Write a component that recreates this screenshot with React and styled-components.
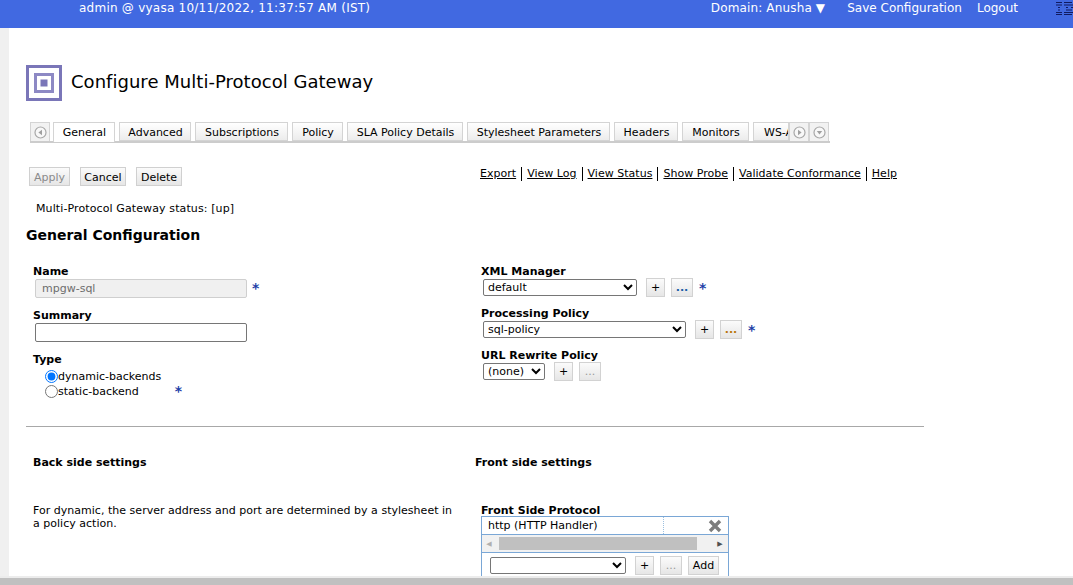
import styled, { createGlobalStyle } from 'styled-components';

const tabs = [
	{ label: 'General', width: 62, active: true },
	{ label: 'Advanced', width: 72 },
	{ label: 'Subscriptions', width: 93 },
	{ label: 'Policy', width: 51 },
	{ label: 'SLA Policy Details', width: 116 },
	{ label: 'Stylesheet Parameters', width: 143 },
	{ label: 'Headers', width: 64 },
	{ label: 'Monitors', width: 67 },
];

const links = ['Export', 'View Log', 'View Status', 'Show Probe', 'Validate Conformance', 'Help'];

const GlobalStyle = createGlobalStyle`
	html, body {
		margin: 0;
		height: 585px;
		overflow: hidden;
		background: #ffffff;
	}
	body {
		font-family: "DejaVu Sans", Verdana, sans-serif;
		font-size: 11px;
		color: #000000;
	}
`;

const Page = styled.div`
	position: relative;
	width: 1073px;
	height: 585px;
	overflow: hidden;
`;

const TopBar = styled.header`
	box-sizing: border-box;
	display: flex;
	justify-content: space-between;
	height: 28px;
	padding: 0 0 0 79px;
	background: #4169e1;
	color: #ffffff;
	font-size: 12px;
	line-height: 15px;
`;

const TopLeft = styled.span`
	margin-top: 1px;
	letter-spacing: 0.24px;
`;

const TopRight = styled.nav`
	display: flex;
	align-items: flex-start;
	margin-top: 1px;
`;

const TopItem = styled.span`
	margin-left: ${props => props.$gap || 0}px;
	letter-spacing: ${props => props.$spacing || 0}px;
`;

const IbmLogo = styled.svg`
	margin: 0 0 0 ${props => props.$gap}px;
	width: 17px;
	height: 14px;
`;

const Body = styled.div`
	display: flex;
`;

const Gutter = styled.div`
	flex: 0 0 9px;
	height: 549px;
	background: #f0f0f0;
`;

const Main = styled.main`
	flex: 1;
	padding: 37px 0 0 17px;
`;

const TitleRow = styled.div`
	display: flex;
	align-items: center;
	gap: 9px;
	height: 36px;
`;

const Title = styled.h1`
	margin: -4px 0 0;
	font-size: 18px;
	font-weight: normal;
	letter-spacing: 0.03px;
`;

const TabBar = styled.div`
	display: flex;
	box-sizing: border-box;
	width: 800px;
	height: 21px;
	margin: 21px 0 0 4px;
	border-bottom: 2px solid #cccccc;
`;

const ArrowBox = styled.div`
	box-sizing: border-box;
	flex: 0 0 20px;
	height: 19px;
	display: flex;
	align-items: center;
	justify-content: center;
	border: 1px solid #d4d4d4;
	border-bottom: 0;
	background: #f2f2f2;
`;

const Tab = styled.div`
	box-sizing: border-box;
	flex: 0 0 ${props => props.$width}px;
	height: ${props => (props.$active ? 20 : 19)}px;
	margin-left: ${props => props.$left}px;
	padding-left: 1px;
	border: 1px solid #d4d4d4;
	border-bottom: ${props => (props.$active ? '0' : '1px solid #d4d4d4')};
	background: ${props => (props.$active ? '#ffffff' : 'linear-gradient(#ffffff, #ececec)')};
	text-align: center;
	line-height: 19px;
	white-space: nowrap;
	overflow: hidden;
`;

const ClippedTab = styled(Tab)`
	text-align: left;
	padding-left: 10px;
`;

const ActionRow = styled.div`
	display: flex;
	height: 32px;
	margin: 24px 0 0 3px;
`;

const ActionButtons = styled.div`
	display: flex;
	gap: 10px;
	width: 451px;
`;

const ActionButton = styled.div`
	box-sizing: border-box;
	width: ${props => props.$width}px;
	height: 19px;
	border: 1px solid #d0d0d0;
	background: linear-gradient(#fbfbfb, #e6e6e6);
	text-align: center;
	line-height: 19px;
	color: ${props => (props.$disabled ? '#8a8a8a' : '#000000')};
`;

const LinkRow = styled.div`
	display: flex;
	align-items: flex-start;
	height: 15px;
	letter-spacing: 0.02px;
`;

const LinkItem = styled.a`
	padding: 0 5px;
	border-left: ${props => (props.$first ? '0' : '1px solid #000000')};
	padding-left: ${props => (props.$first ? 0 : 5)}px;
	line-height: 14px;
	color: #000000;
	text-decoration: underline;
`;

const Status = styled.div`
	margin: 2px 0 0 10px;
	line-height: 15px;
	letter-spacing: 0.11px;
`;

const SectionTitle = styled.h2`
	margin: 10px 0 0;
	font-size: 14px;
	line-height: 18px;
	font-weight: bold;
`;

const Columns = styled.div`
	display: grid;
	grid-template-columns: 448px 1fr;
	margin: 21px 0 0 7px;
	width: 700px;
	height: 161px;
`;

const Label = styled.label`
	display: block;
	font-weight: bold;
	line-height: 14px;
	margin-top: ${props => props.$top || 0}px;
`;

const Field = styled.div`
	display: flex;
	align-items: flex-start;
	padding-left: 2px;
`;

const TextInput = styled.input`
	box-sizing: border-box;
	width: 212px;
	height: 19px;
	margin: 0;
	padding: 0 6px;
	border: 1px solid ${props => (props.disabled ? '#cfcfcf' : '#767676')};
	border-radius: 2px;
	background: ${props => (props.disabled ? '#f0f0f0' : '#ffffff')};
	color: #6d6d6d;
	font: 11px "DejaVu Sans", sans-serif;
`;

const Required = styled.span`
	margin-left: ${props => props.$left}px;
	color: #1d3fa8;
	font-size: 14px;
	font-weight: bold;
	line-height: 19px;
`;

const RadioList = styled.div`
	padding: 2px 0 0 12px;
`;

const RadioRow = styled.div`
	display: flex;
	align-items: center;
	height: 15px;
`;

const Radio = styled.input`
	width: 13px;
	height: 13px;
	margin: 0;
`;

const SelectBox = styled.select`
	box-sizing: border-box;
	width: ${props => props.$width}px;
	height: 17px;
	margin: 0;
	padding: 0;
	border-radius: 2px;
	background: #ffffff;
	font: 11px "DejaVu Sans", sans-serif;
`;

const SmallButton = styled.div`
	box-sizing: border-box;
	width: ${props => props.$width}px;
	height: 19px;
	margin: -1px 0 0 ${props => props.$left}px;
	border: 1px solid #d2d2d2;
	background: linear-gradient(#fbfbfb, #e6e6e6);
	text-align: center;
	line-height: 18px;
	font-weight: ${props => (props.$bold ? 'bold' : 'normal')};
	color: ${props => props.$color || '#000000'};
`;

const Rule = styled.hr`
	width: 898px;
	margin: 0;
	border: 0;
	border-top: 1px solid #a8a8a8;
`;

const SideHeads = styled.div`
	display: grid;
	grid-template-columns: 442px 1fr;
	margin: 29px 0 0 7px;
	font-weight: bold;
	line-height: 14px;
`;

const LowerColumns = styled.div`
	display: grid;
	grid-template-columns: 448px 1fr;
	margin: 34px 0 0 7px;
`;

const HelpText = styled.p`
	margin: 0;
	width: 424px;
	line-height: 13px;
	letter-spacing: 0.02px;
`;

const ProtocolTable = styled.div`
	box-sizing: border-box;
	width: 248px;
	border: 1px solid #7aa7d6;
	border-bottom: 0;
	margin-top: -2px;
`;

const ProtocolRow = styled.div`
	display: flex;
	justify-content: space-between;
	height: 17px;
	border-bottom: 1px solid #7aa7d6;
	line-height: 17px;
`;

const ProtocolName = styled.span`
	box-sizing: border-box;
	width: 182px;
	padding-left: 6px;
	border-right: 1px dotted #9cc0e0;
`;

const RemoveIcon = styled.svg`
	width: 14px;
	height: 14px;
	margin: 2px 6px 0 0;
`;

const TableScroll = styled.div`
	display: flex;
	align-items: center;
	height: 17px;
	border-bottom: 1px solid #7aa7d6;
	background: #f1f1f1;
`;

const ScrollThumb = styled.div`
	width: 198px;
	height: 13px;
	margin: 0 16px 0 3px;
	background: #c0c0c0;
`;

const ScrollArrow = styled.span`
	flex: 0 0 14px;
	text-align: center;
	font-size: 7px;
	color: ${props => props.$color};
`;

const AddRow = styled.div`
	display: flex;
	align-items: flex-start;
	padding: 4px 0 0 8px;
	height: 20px;
`;

const BottomScrollbar = styled.div`
	position: absolute;
	left: 0;
	right: 0;
	bottom: 0;
	height: 7px;
	background: #c0c0c0;
	border-top: 2px solid #ececec;
`;

const App = () => (
	<Page>
		<GlobalStyle />
		<TopBar>
			<TopLeft>admin @ vyasa 10/11/2022, 11:37:57 AM (IST)</TopLeft>
			<TopRight>
				<TopItem $spacing={0.15}>Domain: Anusha ▼</TopItem>
				<TopItem $gap={22}>Save Configuration</TopItem>
				<TopItem $gap={15}>Logout</TopItem>
				<IbmLogo $gap={38} viewBox="0 0 17 14">
					<path d="M0 1.5h6M8 1.5h8M0 4h6M8 4h9M2 6.5h2M10 6.5h2M15 6.5h2M2 9h2M10 9h6M0 11.5h6M8 11.5h9M0 13.5h6M8 13.5h8" stroke="#101a60" strokeWidth="1" />
				</IbmLogo>
			</TopRight>
		</TopBar>
		<Body>
			<Gutter />
			<Main>
				<TitleRow>
					<svg width="36" height="36" viewBox="0 0 36 36">
						<rect width="36" height="36" fill="#7a76b8" />
						<rect x="3" y="3" width="30" height="30" fill="#ffffff" />
						<rect x="8" y="8" width="20" height="20" fill="#8d89c4" />
						<rect x="11" y="11" width="14" height="14" fill="#ffffff" />
						<rect x="14.5" y="14.5" width="7" height="7" fill="#7a76b8" />
					</svg>
					<Title>Configure Multi-Protocol Gateway</Title>
				</TitleRow>
				<TabBar>
					<ArrowBox>
						<svg width="13" height="13" viewBox="0 0 13 13">
							<circle cx="6.5" cy="6.5" r="5.5" fill="#f8f8f8" stroke="#a8a8a8" strokeWidth="1.2" />
							<path d="M8 3.8v5.4L4.4 6.5z" fill="#a0a0a0" />
						</svg>
					</ArrowBox>
					{tabs.map((tab, i) => (
						<Tab key={tab.label} $width={tab.width} $active={tab.active} $left={i === 0 ? 3 : 4}>
							{tab.label}
						</Tab>
					))}
					<ClippedTab $width={36} $left={4}>WS-Addressing</ClippedTab>
					<ArrowBox>
						<svg width="13" height="13" viewBox="0 0 13 13">
							<circle cx="6.5" cy="6.5" r="5.5" fill="#f8f8f8" stroke="#a8a8a8" strokeWidth="1.2" />
							<path d="M5 3.8v5.4L8.6 6.5z" fill="#a0a0a0" />
						</svg>
					</ArrowBox>
					<ArrowBox>
						<svg width="13" height="13" viewBox="0 0 13 13">
							<circle cx="6.5" cy="6.5" r="5.5" fill="#f8f8f8" stroke="#a8a8a8" strokeWidth="1.2" />
							<path d="M3.8 5h5.4L6.5 8.6z" fill="#a0a0a0" />
						</svg>
					</ArrowBox>
				</TabBar>
				<ActionRow>
					<ActionButtons>
						<ActionButton $disabled $width={41}>Apply</ActionButton>
						<ActionButton $width={46}>Cancel</ActionButton>
						<ActionButton $width={46}>Delete</ActionButton>
					</ActionButtons>
					<LinkRow>
						{links.map((link, i) => (
							<LinkItem key={link} $first={i === 0}>{link}</LinkItem>
						))}
					</LinkRow>
				</ActionRow>
				<Status>Multi-Protocol Gateway status: [up]</Status>
				<SectionTitle>General Configuration</SectionTitle>
				<Columns>
					<div>
						<Label>Name</Label>
						<Field>
							<TextInput disabled value="mpgw-sql" readOnly />
							<Required $left={5}>*</Required>
						</Field>
						<Label $top={11}>Summary</Label>
						<Field>
							<TextInput defaultValue="" />
						</Field>
						<Label $top={11}>Type</Label>
						<RadioList>
							<RadioRow>
								<Radio type="radio" name="type" defaultChecked />
								<span>dynamic-backends</span>
							</RadioRow>
							<RadioRow>
								<Radio type="radio" name="type" />
								<span>static-backend</span>
								<Required $left={36}>*</Required>
							</RadioRow>
						</RadioList>
					</div>
					<div>
						<Label>XML Manager</Label>
						<Field>
							<SelectBox $width={154}><option>default</option></SelectBox>
							<SmallButton $width={19} $left={9}>+</SmallButton>
							<SmallButton $width={22} $left={6} $bold $color="#1b5fa8">...</SmallButton>
							<Required $left={6}>*</Required>
						</Field>
						<Label $top={9}>Processing Policy</Label>
						<Field>
							<SelectBox $width={203}><option>sql-policy</option></SelectBox>
							<SmallButton $width={19} $left={9}>+</SmallButton>
							<SmallButton $width={22} $left={6} $bold $color="#b9770e">...</SmallButton>
							<Required $left={6}>*</Required>
						</Field>
						<Label $top={9}>URL Rewrite Policy</Label>
						<Field>
							<SelectBox $width={62}><option>(none)</option></SelectBox>
							<SmallButton $width={19} $left={9}>+</SmallButton>
							<SmallButton $width={22} $left={6} $color="#9a9a9a">...</SmallButton>
						</Field>
					</div>
				</Columns>
				<Rule />
				<SideHeads>
					<span>Back side settings</span>
					<span>Front side settings</span>
				</SideHeads>
				<LowerColumns>
					<HelpText>For dynamic, the server address and port are determined by a stylesheet in a policy action.</HelpText>
					<div>
						<Label>Front Side Protocol</Label>
						<ProtocolTable>
							<ProtocolRow>
								<ProtocolName>http (HTTP Handler)</ProtocolName>
								<RemoveIcon viewBox="0 0 14 14">
									<path d="M2 2l10 10M12 2L2 12" stroke="#7c7c7c" strokeWidth="3.4" />
								</RemoveIcon>
							</ProtocolRow>
							<TableScroll>
								<ScrollArrow $color="#b0b0b0">◀</ScrollArrow>
								<ScrollThumb />
								<ScrollArrow $color="#505050">▶</ScrollArrow>
							</TableScroll>
							<AddRow>
								<SelectBox $width={136}><option></option></SelectBox>
								<SmallButton $width={19} $left={9}>+</SmallButton>
								<SmallButton $width={22} $left={6} $color="#9a9a9a">...</SmallButton>
								<SmallButton $width={31} $left={6}>Add</SmallButton>
							</AddRow>
						</ProtocolTable>
					</div>
				</LowerColumns>
			</Main>
		</Body>
		<BottomScrollbar />
	</Page>
);

export default App;
